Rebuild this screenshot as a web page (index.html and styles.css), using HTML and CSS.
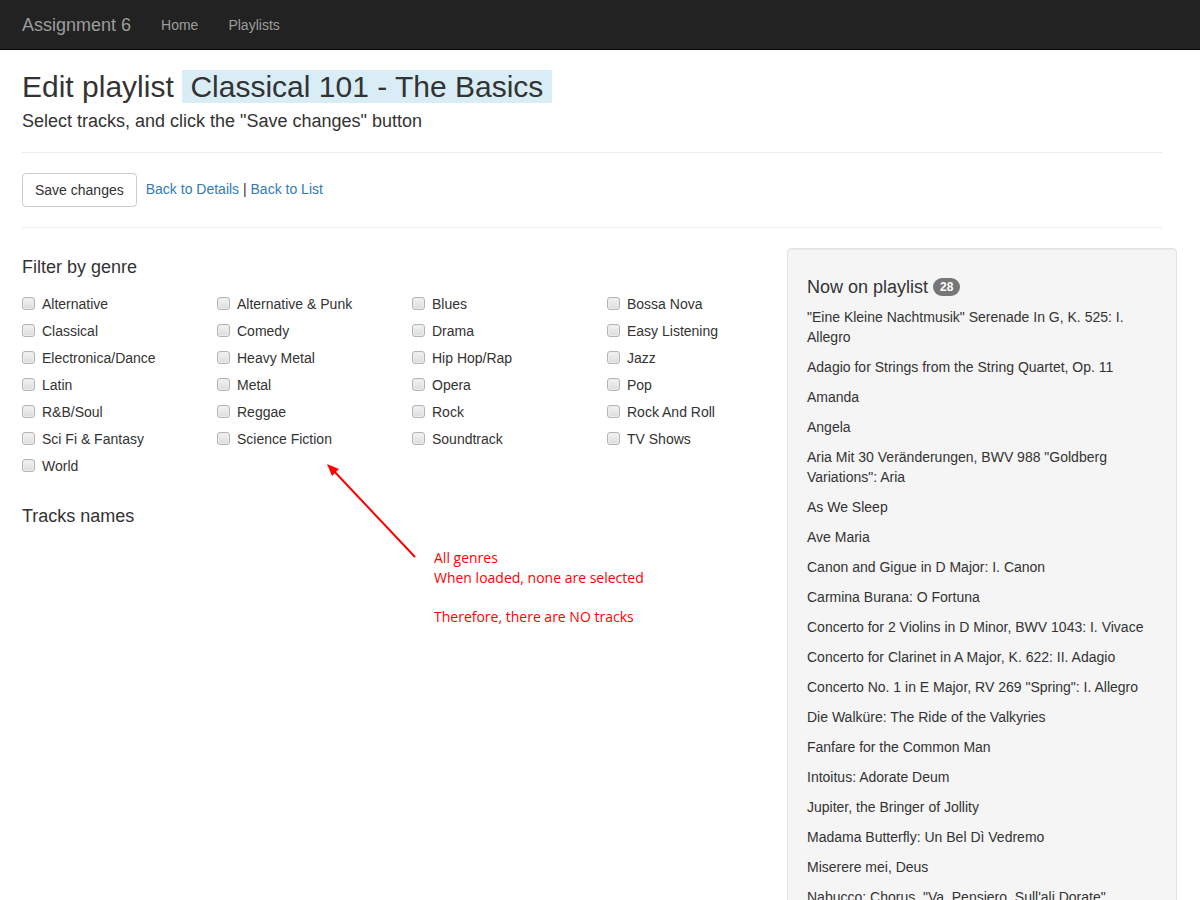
FILE: index.html
```html
<!DOCTYPE html>
<html>
<head>
<meta charset="utf-8">
<title>Edit playlist</title>
<link rel="stylesheet" href="styles.css">
</head>
<body>
<nav class="navbar">
  <div class="navbar-inner">
    <a class="brand" href="#">Assignment 6</a>
    <ul class="nav">
      <li><a href="#">Home</a></li>
      <li><a href="#">Playlists</a></li>
    </ul>
  </div>
</nav>
<main class="container">
  <h2 class="title">Edit playlist <span class="bg-info">&nbsp;Classical 101 - The Basics&nbsp;</span></h2>
  <h4 class="subtitle">Select tracks, and click the "Save changes" button</h4>
  <hr>
  <div class="actions">
    <button class="btn" type="button">Save changes</button>
    <span class="links"><a href="#">Back to Details</a> | <a href="#">Back to List</a></span>
  </div>
  <hr>
  <div class="row">
    <div class="col-left">
      <h4 class="section">Filter by genre</h4>
      <div class="genres">
        <label class="genre"><span class="cb"></span>Alternative</label>
        <label class="genre"><span class="cb"></span>Alternative &amp; Punk</label>
        <label class="genre"><span class="cb"></span>Blues</label>
        <label class="genre"><span class="cb"></span>Bossa Nova</label>
        <label class="genre"><span class="cb"></span>Classical</label>
        <label class="genre"><span class="cb"></span>Comedy</label>
        <label class="genre"><span class="cb"></span>Drama</label>
        <label class="genre"><span class="cb"></span>Easy Listening</label>
        <label class="genre"><span class="cb"></span>Electronica/Dance</label>
        <label class="genre"><span class="cb"></span>Heavy Metal</label>
        <label class="genre"><span class="cb"></span>Hip Hop/Rap</label>
        <label class="genre"><span class="cb"></span>Jazz</label>
        <label class="genre"><span class="cb"></span>Latin</label>
        <label class="genre"><span class="cb"></span>Metal</label>
        <label class="genre"><span class="cb"></span>Opera</label>
        <label class="genre"><span class="cb"></span>Pop</label>
        <label class="genre"><span class="cb"></span>R&amp;B/Soul</label>
        <label class="genre"><span class="cb"></span>Reggae</label>
        <label class="genre"><span class="cb"></span>Rock</label>
        <label class="genre"><span class="cb"></span>Rock And Roll</label>
        <label class="genre"><span class="cb"></span>Sci Fi &amp; Fantasy</label>
        <label class="genre"><span class="cb"></span>Science Fiction</label>
        <label class="genre"><span class="cb"></span>Soundtrack</label>
        <label class="genre"><span class="cb"></span>TV Shows</label>
        <label class="genre"><span class="cb"></span>World</label>
      </div>
      <h4 class="section tracks-title">Tracks names</h4>

      <svg class="note-arrow" width="100" height="110" viewBox="0 0 100 110">
        <line x1="12" y1="15" x2="95" y2="103" stroke="#f00" stroke-width="2"/>
        <polygon points="7,10 19,15 12,22" fill="#f00"/>
      </svg>
      <div class="note-text">All genres
When loaded, none are selected

Therefore, there are NO tracks</div>
    </div>
    <div class="col-right well">
      <h4 class="well-title">Now on playlist <span class="badge">28</span></h4>
      <p>"Eine Kleine Nachtmusik" Serenade In G, K. 525: I. Allegro</p>
      <p>Adagio for Strings from the String Quartet, Op. 11</p>
      <p>Amanda</p>
      <p>Angela</p>
      <p>Aria Mit 30 Veränderungen, BWV 988 "Goldberg Variations": Aria</p>
      <p>As We Sleep</p>
      <p>Ave Maria</p>
      <p>Canon and Gigue in D Major: I. Canon</p>
      <p>Carmina Burana: O Fortuna</p>
      <p>Concerto for 2 Violins in D Minor, BWV 1043: I. Vivace</p>
      <p>Concerto for Clarinet in A Major, K. 622: II. Adagio</p>
      <p>Concerto No. 1 in E Major, RV 269 "Spring": I. Allegro</p>
      <p>Die Walküre: The Ride of the Valkyries</p>
      <p>Fanfare for the Common Man</p>
      <p>Intoitus: Adorate Deum</p>
      <p>Jupiter, the Bringer of Jollity</p>
      <p>Madama Butterfly: Un Bel Dì Vedremo</p>
      <p>Miserere mei, Deus</p>
      <p>Nabucco: Chorus, "Va, Pensiero, Sull'ali Dorate"</p>
      <p>Pavan, Lachrimae Antiquae</p>
      <p>Requiem, Op.48: 4 Pie Jesu</p>
      <p>Suite No. 3 in D, BWV 1068: III. Gavotte I &amp; II</p>
      <p>Symphony No. 5 in C Minor: I. Allegro con brio</p>
      <p>Symphony No.104 in D Major "London": IV. Finale: Spiritoso</p>
      <p>The Messiah: Behold, I Tell You a Mystery... The Trumpet Shall Sound</p>
      <p>Toccata and Fugue in D Minor, BWV 565: I. Toccata</p>
      <p>Turandot, Act III, Nessun dorma!</p>
      <p>Wellington's Victory or the Battle Symphony, Op.91: 2. Symphony of Triumph</p>
    </div>
  </div>
</main>
</body>
</html>
```

FILE: styles.css
```css
html {
  overflow: hidden;
}
body {
  margin: 0;
  font-family: "Liberation Sans", Arial, Helvetica, sans-serif;
  font-size: 14px;
  line-height: 20px;
  color: #333;
  background: #fff;
}
a {
  color: #337ab7;
  text-decoration: none;
}

/* navbar */
.navbar {
  height: 50px;
  background: #222;
  border-bottom: 1px solid #080808;
  box-sizing: border-box;
}
.navbar-inner {
  display: flex;
  align-items: center;
  height: 50px;
  margin-left: 7px;
}
.brand {
  padding: 15px;
  font-size: 18px;
  line-height: 20px;
  color: #9d9d9d;
}
.nav {
  display: flex;
  list-style: none;
  margin: 0;
  padding: 0;
}
.nav a {
  display: block;
  padding: 15px;
  line-height: 20px;
  color: #9d9d9d;
}

/* container */
.container {
  width: 1140px;
  margin-left: 7px;
  padding: 0 15px;
}
.title {
  margin: 20px 0 8px;
  font-size: 30px;
  font-weight: 500;
  line-height: 33px;
}
.bg-info {
  background: #d9edf7;
}
.subtitle {
  margin: 8px 0 10px;
  padding-bottom: 1px;
  font-size: 18px;
  font-weight: 500;
  line-height: 20px;
}
hr {
  margin: 20px 0;
  border: 0;
  border-top: 1px solid #eee;
  height: 0;
}
.actions {
  display: flex;
  align-items: center;
  gap: 9px;
}
.btn {
  font-family: inherit;
  font-size: 14px;
  line-height: 20px;
  color: #333;
  background: #fff;
  border: 1px solid #ccc;
  border-radius: 4px;
  padding: 6px 12px;
  height: 34px;
}
.links {
  color: #333;
  margin-top: -2px;
}

/* row */
.row {
  display: flex;
  margin: 0 -15px;
}
.col-left {
  position: relative;
  width: 750px;
  padding: 0 15px;
}
.col-right {
  width: 390px;
  box-sizing: border-box;
}
.section {
  margin: 9px 0 10px;
  font-size: 18px;
  font-weight: 500;
  line-height: 20px;
}
.genres {
  display: grid;
  grid-template-columns: 195px 195px 195px 165px;
  grid-auto-rows: 27px;
  padding-top: 3px;
}
.genre {
  display: flex;
  align-items: center;
  white-space: nowrap;
}
.cb {
  display: inline-block;
  width: 11px;
  height: 11px;
  margin-right: 7px;
  border: 1px solid #b4b4b4;
  border-radius: 3px;
  background: linear-gradient(#f3f3f3, #dcdcdc);
  box-shadow: inset 0 0 0 1px #ececec;
}
.tracks-title {
  margin-top: 27px;
}
.note-arrow {
  position: absolute;
  left: 313px;
  top: 206px;
}
.note-text {
  position: absolute;
  left: 427px;
  top: 300px;
  white-space: pre-line;
  font-family: "Open Sans", "Noto Sans", sans-serif;
  font-size: 14px;
  line-height: 19.6px;
  color: #f00;
}

/* well */
.well {
  min-height: 700px;
  padding: 19px;
  background: #f5f5f5;
  border: 1px solid #e3e3e3;
  border-radius: 4px;
  box-shadow: inset 0 1px 1px rgba(0, 0, 0, 0.05);
}
.well-title {
  margin: 9px 0 10px;
  font-size: 18px;
  font-weight: 500;
  line-height: 20px;
}
.badge {
  display: inline-block;
  min-width: 10px;
  padding: 3px 7px;
  font-size: 12px;
  font-weight: bold;
  line-height: 12px;
  color: #fff;
  text-align: center;
  vertical-align: middle;
  background: #777;
  border-radius: 10px;
  position: relative;
  top: -1px;
}
.well p {
  margin: 0 0 10px;
}
```
